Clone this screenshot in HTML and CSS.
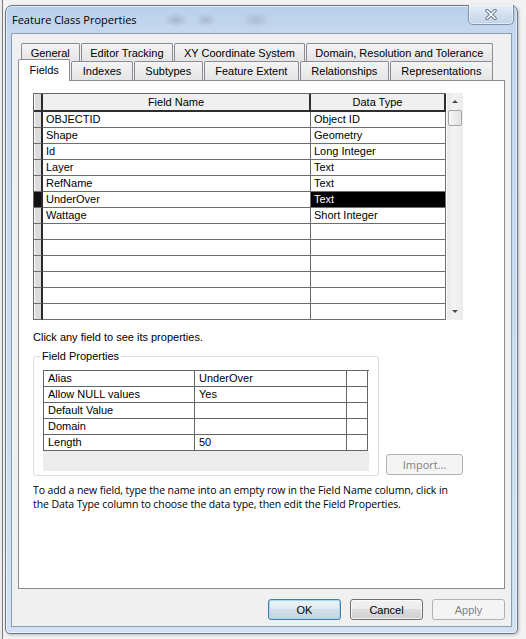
FILE: index.html
```html
<!DOCTYPE html>
<html lang="en">
<head>
    <meta charset="UTF-8">
    <title>Feature Class Properties</title>
    <link rel="stylesheet" href="styles.css">
</head>
<body>
    <div class="window">
        <div class="titlebar">
            <span class="title">Feature Class Properties</span>
            <button class="close" type="button" aria-label="Close">
                <svg width="12" height="11" viewBox="0 0 12 11">
                    <path d="M2 1.5 L10 9.5 M10 1.5 L2 9.5" stroke="#6a7686" stroke-width="3.4" stroke-linecap="round"/>
                    <path d="M2 1.5 L10 9.5 M10 1.5 L2 9.5" stroke="#fbfcfd" stroke-width="1.6" stroke-linecap="round"/>
                </svg>
            </button>
        </div>

        <div class="client">
            <div class="tabs">
                <div class="tab-row back">
                    <span class="tab">General</span>
                    <span class="tab">Editor Tracking</span>
                    <span class="tab">XY Coordinate System</span>
                    <span class="tab">Domain, Resolution and Tolerance</span>
                </div>
                <div class="tab-row front">
                    <span class="tab active">Fields</span>
                    <span class="tab">Indexes</span>
                    <span class="tab">Subtypes</span>
                    <span class="tab">Feature Extent</span>
                    <span class="tab">Relationships</span>
                    <span class="tab">Representations</span>
                </div>
            </div>

            <div class="panel">
                <div class="grid-wrap">
                    <div class="grid">
                        <div class="grid-row head">
                            <div class="cell sel"></div>
                            <div class="cell">Field Name</div>
                            <div class="cell">Data Type</div>
                        </div>
                        <div class="grid-row"><div class="cell sel"></div><div class="cell">OBJECTID</div><div class="cell">Object ID</div></div>
                        <div class="grid-row"><div class="cell sel"></div><div class="cell">Shape</div><div class="cell">Geometry</div></div>
                        <div class="grid-row"><div class="cell sel"></div><div class="cell">Id</div><div class="cell">Long Integer</div></div>
                        <div class="grid-row"><div class="cell sel"></div><div class="cell">Layer</div><div class="cell">Text</div></div>
                        <div class="grid-row"><div class="cell sel"></div><div class="cell">RefName</div><div class="cell">Text</div></div>
                        <div class="grid-row"><div class="cell sel current"></div><div class="cell">UnderOver</div><div class="cell picked">Text</div></div>
                        <div class="grid-row"><div class="cell sel"></div><div class="cell">Wattage</div><div class="cell">Short Integer</div></div>
                        <div class="grid-row"><div class="cell sel"></div><div class="cell"></div><div class="cell"></div></div>
                        <div class="grid-row"><div class="cell sel"></div><div class="cell"></div><div class="cell"></div></div>
                        <div class="grid-row"><div class="cell sel"></div><div class="cell"></div><div class="cell"></div></div>
                        <div class="grid-row"><div class="cell sel"></div><div class="cell"></div><div class="cell"></div></div>
                        <div class="grid-row"><div class="cell sel"></div><div class="cell"></div><div class="cell"></div></div>
                        <div class="grid-row"><div class="cell sel"></div><div class="cell"></div><div class="cell"></div></div>
                    </div>
                    <div class="scrollbar">
                        <div class="arrow"><span class="tri up"></span></div>
                        <div class="thumb"></div>
                        <div class="track"></div>
                        <div class="arrow"><span class="tri down"></span></div>
                    </div>
                </div>

                <p class="hint">Click any field to see its properties.</p>

                <div class="props-row">
                    <fieldset class="props">
                        <legend>Field Properties</legend>
                        <div class="ptable">
                            <div class="prow"><div class="pcell">Alias</div><div class="pcell">UnderOver</div><div class="pcell"></div></div>
                            <div class="prow"><div class="pcell">Allow NULL values</div><div class="pcell">Yes</div><div class="pcell"></div></div>
                            <div class="prow"><div class="pcell">Default Value</div><div class="pcell"></div><div class="pcell"></div></div>
                            <div class="prow"><div class="pcell">Domain</div><div class="pcell"></div><div class="pcell"></div></div>
                            <div class="prow"><div class="pcell">Length</div><div class="pcell">50</div><div class="pcell"></div></div>
                        </div>
                        <div class="pfoot"></div>
                    </fieldset>
                    <button class="import" type="button" disabled>Import...</button>
                </div>

                <p class="help">To add a new field, type the name into an empty row in the Field Name column, click in<br>the Data Type column to choose the data type, then edit the Field Properties.</p>
            </div>

            <div class="buttons">
                <button class="btn default" type="button">OK</button>
                <button class="btn" type="button">Cancel</button>
                <button class="btn" type="button" disabled>Apply</button>
            </div>
        </div>
    </div>
</body>
</html>
```

FILE: styles.css
```css
* {
    box-sizing: border-box;
}
html, body {
    margin: 0;
}
body {
    width: 526px;
    height: 639px;
    overflow: hidden;
    padding: 5px 0 0 5px;
    background: linear-gradient(to right, #ececec 0 2px, #7a7a7a 2px 3px, #f2f2f2 3px);
    font-family: "Liberation Sans", Arial, sans-serif;
    font-size: 11px;
    color: #000;
}

/* window frame */
.window {
    width: 513px;
    height: 629px;
    border: 1px solid #6b7888;
    border-radius: 7px 7px 5px 5px;
    background:
        radial-gradient(ellipse 12px 7px at 170px 14px, rgba(110, 125, 145, 0.35), transparent),
        radial-gradient(ellipse 10px 7px at 200px 14px, rgba(110, 125, 145, 0.3), transparent),
        radial-gradient(ellipse 14px 8px at 250px 14px, rgba(110, 125, 145, 0.28), transparent),
        linear-gradient(#b9d0ea, #c5d8ee 28px, #cadcf0 60%, #d2e2f4);
    box-shadow: inset 0 0 0 1px rgba(255, 255, 255, 0.55), 1px 1px 3px rgba(0, 0, 0, 0.25);
    padding: 0 5px 6px 5px;
    display: flex;
    flex-direction: column;
}
.titlebar {
    height: 27px;
    display: flex;
    align-items: center;
    justify-content: space-between;
}
.title {
    font-family: "Open Sans", sans-serif;
    font-size: 11px;
    padding-left: 1px;
}
.close {
    align-self: flex-start;
    margin: -1px -2px 0 0;
    width: 46px;
    height: 20px;
    padding: 0;
    border: 1px solid #8193ab;
    border-top: none;
    border-radius: 0 0 5px 5px;
    background: linear-gradient(#e6eef8, #d2dfee 50%, #c3d4e9);
    box-shadow: inset 0 0 0 1px rgba(255, 255, 255, 0.5);
    display: flex;
    align-items: center;
    justify-content: center;
}

.client {
    flex: 1;
    background: #f0f0f0;
    border: 1px solid #8d9cb1;
    padding: 9px 6px 6px;
    display: flex;
    flex-direction: column;
}

/* tabs */
.tab-row {
    display: flex;
    gap: 1px;
}
.tab-row.back {
    height: 18px;
    margin: 0 12px 0 3px;
}
.tab-row.front {
    height: 19px;
    margin-right: 12px;
    align-items: flex-end;
}
.tab {
    flex: 1 1 auto;
    height: 100%;
    padding: 0 5px;
    text-align: center;
    white-space: nowrap;
    line-height: 19px;
    border: 1px solid #898c95;
    border-bottom: none;
    border-radius: 2px 2px 0 0;
    background: linear-gradient(#f4f4f4, #e4e4e4);
}
.front .tab {
    line-height: 19px;
}
.tab.active {
    position: relative;
    z-index: 1;
    height: 22px;
    margin-bottom: -1px;
    line-height: 20px;
    background: #fff;
}

.panel {
    height: 509px;
    background: #fff;
    border: 1px solid #898c95;
    padding: 12px 0 0 14px;
}

/* field grid */
.grid-wrap {
    display: flex;
    gap: 1px;
    height: 227px;
}
.grid {
    width: 413px;
    border-left: 1px solid #666;
    border-top: 1px solid #666;
}
.grid-row {
    display: grid;
    grid-template-columns: 9px 268px 135px;
    height: 16px;
}
.cell {
    border-right: 1px solid #6e6e6e;
    border-bottom: 1px solid #6e6e6e;
    padding: 0 3px;
    line-height: 15px;
    white-space: nowrap;
    overflow: hidden;
}
.grid-row.head {
    height: 18px;
}
.head .cell {
    background: #f0f0f0;
    text-align: center;
    line-height: 16px;
    border-right: 2px solid #2e2e2e;
    border-bottom: 2px solid #2e2e2e;
}
.cell.sel {
    padding: 0;
    background: #dcdcdc;
    box-shadow: inset 1px 0 #fff;
    border-right: 2px solid #2a2a2a;
}
.cell.sel.current {
    background: #111;
    box-shadow: none;
}
.cell.picked {
    background: #000;
    color: #fff;
}

.scrollbar {
    width: 16px;
    display: flex;
    flex-direction: column;
    background: linear-gradient(to right, #e8e8e8, #f3f3f3 40%, #ececec);
}
.arrow {
    height: 17px;
    display: flex;
    align-items: center;
    justify-content: center;
}
.tri {
    width: 0;
    height: 0;
    border-left: 3px solid transparent;
    border-right: 3px solid transparent;
}
.tri.up {
    border-bottom: 3px solid #4a4a4a;
}
.tri.down {
    border-top: 3px solid #4a4a4a;
}
.thumb {
    height: 16px;
    margin: 0 1px;
    border: 1px solid #a6a6a6;
    border-radius: 2px;
    background: linear-gradient(to right, #f6f6f6, #e2e2e2);
}
.track {
    flex: 1;
}

.hint {
    margin: 11px 0 0;
    line-height: 13px;
}

/* field properties */
.props-row {
    display: flex;
    align-items: flex-end;
    gap: 7px;
    margin-top: 6px;
}
.props {
    width: 346px;
    margin: 0;
    padding: 0 8px 4px 9px;
    border: 1px solid #d5dfe5;
    border-radius: 3px;
}
.props legend {
    margin-left: -3px;
    padding: 0 2px;
    line-height: 13px;
}
.ptable {
    width: 326px;
    margin-top: 7px;
    border-left: 1px solid #646464;
    border-top: 1px solid #646464;
}
.prow {
    display: grid;
    grid-template-columns: 151px 152px 21px;
    height: 16px;
}
.pcell {
    border-right: 1px solid #646464;
    border-bottom: 1px solid #646464;
    padding: 0 4px;
    line-height: 15px;
    white-space: nowrap;
}
.pfoot {
    width: 326px;
    height: 20px;
    background: #ececec;
}
.import {
    width: 77px;
    height: 21px;
    margin-bottom: 1px;
    border: 1px solid #adb2b5;
    border-radius: 3px;
    background: #f4f4f4;
    color: #838383;
    font-family: "Open Sans", sans-serif;
    font-size: 11px;
}

.help {
    margin: 7px 0 0;
    font-family: "Open Sans", sans-serif;
    font-size: 10.5px;
    letter-spacing: -0.1px;
    line-height: 14px;
}

/* dialog buttons */
.buttons {
    display: flex;
    justify-content: flex-end;
    gap: 9px;
    margin-top: 10px;
}
.btn {
    width: 73px;
    height: 21px;
    padding: 0;
    border: 1px solid #707070;
    border-radius: 3px;
    background: linear-gradient(#f2f2f2, #ebebeb 48%, #dddddd 50%, #cfcfcf);
    box-shadow: inset 0 0 0 1px rgba(255, 255, 255, 0.7);
    font-family: "Liberation Sans", Arial, sans-serif;
    font-size: 11px;
    color: #000;
}
.btn.default {
    border-color: #3c7fb1;
    background: linear-gradient(#edf3f8, #e2ebf2 48%, #d2dfe9 50%, #c6d6e3);
    box-shadow: inset 0 0 0 1px #a7d6f2;
}
.btn:disabled {
    border-color: #adb2b5;
    background: #f4f4f4;
    color: #838383;
    box-shadow: none;
}
```
